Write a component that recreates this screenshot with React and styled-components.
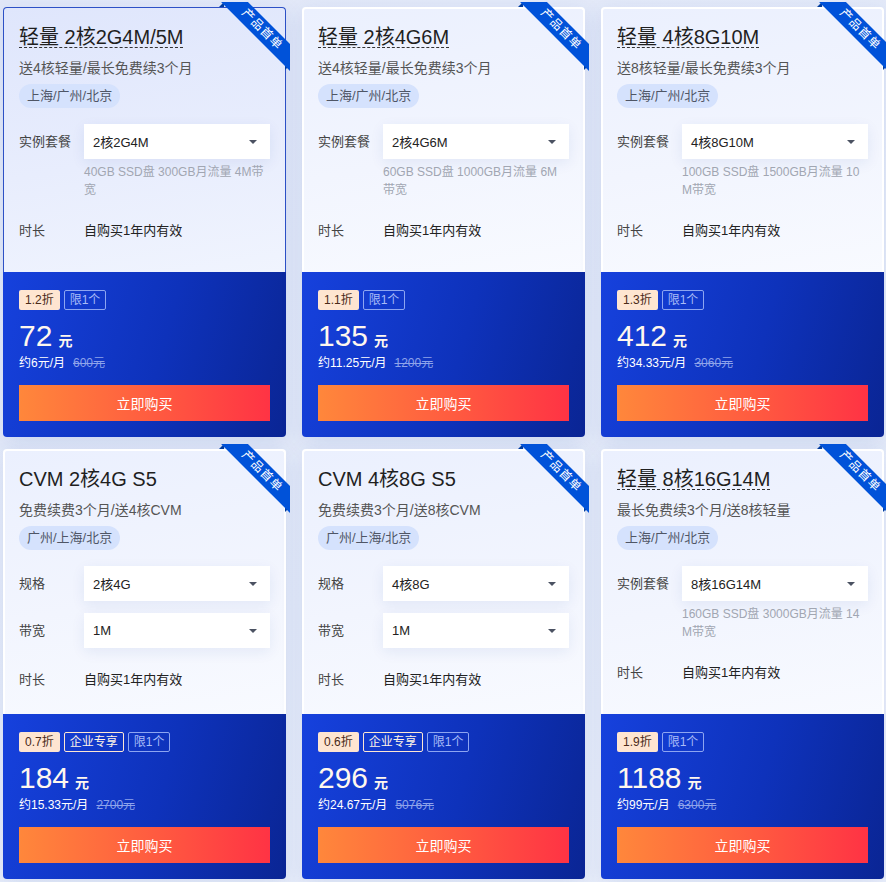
import styled, { createGlobalStyle } from "styled-components"

const GlobalStyle = createGlobalStyle`
  html, body {
    margin: 0;
    padding: 0;
    background: #e4eaf8;
  }
  body {
    font-family: "Liberation Sans", "Noto Sans CJK SC", sans-serif;
    color: #222;
  }
`

const cards = [
  {
    title: "轻量 2核2G4M/5M",
    dashed: true,
    sub: "送4核轻量/最长免费续3个月",
    region: "上海/广州/北京",
    fields: [{ label: "实例套餐", value: "2核2G4M", desc: "40GB SSD盘 300GB月流量 4M带宽" }],
    discount: "1.2折",
    tags: ["限1个"],
    price: "72",
    monthly: "约6元/月",
    origin: "600元",
    active: true,
  },
  {
    title: "轻量 2核4G6M",
    dashed: true,
    sub: "送4核轻量/最长免费续3个月",
    region: "上海/广州/北京",
    fields: [{ label: "实例套餐", value: "2核4G6M", desc: "60GB SSD盘 1000GB月流量 6M带宽" }],
    discount: "1.1折",
    tags: ["限1个"],
    price: "135",
    monthly: "约11.25元/月",
    origin: "1200元",
  },
  {
    title: "轻量 4核8G10M",
    dashed: true,
    sub: "送8核轻量/最长免费续3个月",
    region: "上海/广州/北京",
    fields: [{ label: "实例套餐", value: "4核8G10M", desc: "100GB SSD盘 1500GB月流量 10M带宽" }],
    discount: "1.3折",
    tags: ["限1个"],
    price: "412",
    monthly: "约34.33元/月",
    origin: "3060元",
  },
  {
    title: "CVM 2核4G S5",
    sub: "免费续费3个月/送4核CVM",
    region: "广州/上海/北京",
    fields: [
      { label: "规格", value: "2核4G" },
      { label: "带宽", value: "1M" },
    ],
    discount: "0.7折",
    tags: ["企业专享", "限1个"],
    price: "184",
    monthly: "约15.33元/月",
    origin: "2700元",
  },
  {
    title: "CVM 4核8G S5",
    sub: "免费续费3个月/送8核CVM",
    region: "广州/上海/北京",
    fields: [
      { label: "规格", value: "4核8G" },
      { label: "带宽", value: "1M" },
    ],
    discount: "0.6折",
    tags: ["企业专享", "限1个"],
    price: "296",
    monthly: "约24.67元/月",
    origin: "5076元",
  },
  {
    title: "轻量 8核16G14M",
    dashed: true,
    sub: "最长免费续3个月/送8核轻量",
    region: "上海/广州/北京",
    fields: [{ label: "实例套餐", value: "8核16G14M", desc: "160GB SSD盘 3000GB月流量 14M带宽" }],
    discount: "1.9折",
    tags: ["限1个"],
    price: "1188",
    monthly: "约99元/月",
    origin: "6300元",
  },
]

const ProductCard = ({ card }) => (
  <Card>
    <Ribbon>
      <RibbonBand>产品首单</RibbonBand>
    </Ribbon>
    <Top $active={card.active}>
      <Title>
        <TitleText $dashed={card.dashed}>{card.title}</TitleText>
      </Title>
      <Sub>{card.sub}</Sub>
      <Region>{card.region}</Region>
      {card.fields.map((f) => (
        <Field key={f.label}>
          <Label>{f.label}</Label>
          <div>
            <SelectBox>
              <span>{f.value}</span>
              <Caret />
            </SelectBox>
            {f.desc && <Desc>{f.desc}</Desc>}
          </div>
        </Field>
      ))}
      <TimeRow>
        <Label>时长</Label>
        <TimeValue>自购买1年内有效</TimeValue>
      </TimeRow>
    </Top>
    <Bottom>
      <Badges>
        <Discount>{card.discount}</Discount>
        {card.tags.map((t) => (
          <Tag key={t} $vip={t === "企业专享"}>
            {t}
          </Tag>
        ))}
      </Badges>
      <Price>
        {card.price}
        <Unit>元</Unit>
      </Price>
      <Monthly>
        {card.monthly}
        <Origin>{card.origin}</Origin>
      </Monthly>
      <BuyButton>立即购买</BuyButton>
    </Bottom>
  </Card>
)

const App = () => (
  <>
    <GlobalStyle />
    <Page>
      {cards.map((c) => (
        <ProductCard key={c.title} card={c} />
      ))}
    </Page>
  </>
)

const Page = styled.main`
  display: grid;
  grid-template-columns: repeat(3, 283px);
  align-content: start;
  column-gap: 16px;
  row-gap: 12px;
  padding: 7px 2px 4px 3px;
  min-height: 882px;
  box-sizing: border-box;
  background: linear-gradient(160deg, #e2e8f8 0%, #e6ecf9 60%, #edf1fb 100%);
`

const Card = styled.article`
  position: relative;
  display: flex;
  flex-direction: column;
  border-radius: 4px;
  box-shadow: 0 6px 22px rgba(40, 80, 180, 0.12);
`

const Ribbon = styled.div`
  position: absolute;
  top: -5px;
  right: -4px;
  width: 74px;
  height: 74px;
  overflow: hidden;
  z-index: 2;
  &::before,
  &::after {
    content: "";
    position: absolute;
    width: 0;
    height: 0;
  }
  &::before {
    left: 3px;
    top: 0;
    border-bottom: 5px solid #003c9e;
    border-left: 5px solid transparent;
  }
  &::after {
    right: 0;
    bottom: 6px;
    border-top: 5px solid #003c9e;
    border-right: 5px solid transparent;
  }
`

const RibbonBand = styled.div`
  position: absolute;
  left: -9px;
  top: 18px;
  width: 110px;
  height: 19px;
  line-height: 19px;
  background: #0052d9;
  color: #fff;
  font-size: 12px;
  letter-spacing: 1px;
  text-align: center;
  transform: rotate(45deg);
  z-index: 1;
`

const Top = styled.section`
  flex: 1;
  min-height: 265px;
  box-sizing: border-box;
  padding: 17px 14px 22px;
  border: 2px solid #fff;
  border-bottom: none;
  border-radius: 4px 4px 0 0;
  background: linear-gradient(170deg, #ebf0fe 0%, #f2f5fe 55%, #f8faff 100%);
  ${(p) =>
    p.$active &&
    `
    padding: 18px 15px 22px;
    border: 1px solid #2d51c6;
    border-bottom: none;
    background: linear-gradient(170deg, #dfe6fc 0%, #e8edfd 55%, #f0f4fe 100%);
  `}
`

const Title = styled.h2`
  margin: 0;
  height: 22px;
  font-size: 20px;
  font-weight: 400;
  line-height: 22px;
  color: #1f1f1f;
`

const TitleText = styled.span`
  display: inline-block;
  height: 21px;
  border-bottom: 1px dashed ${(p) => (p.$dashed ? "#333" : "transparent")};
`

const Sub = styled.p`
  margin: 10px 0 0;
  height: 20px;
  font-size: 14px;
  line-height: 20px;
  color: #555;
`

const Region = styled.span`
  display: inline-block;
  margin-top: 6px;
  padding: 0 8px;
  height: 24px;
  line-height: 24px;
  border-radius: 12px;
  background: #d5e2fd;
  color: #4f5666;
  font-size: 13px;
`

const Field = styled.div`
  display: grid;
  grid-template-columns: 65px 1fr;
  margin-top: 16px;
  & + & {
    margin-top: 12px;
  }
`

const Label = styled.span`
  font-size: 13px;
  line-height: 35px;
  color: #444;
`

const SelectBox = styled.div`
  display: flex;
  align-items: center;
  justify-content: space-between;
  height: 35px;
  padding: 0 13px 0 9px;
  background: #fff;
  box-shadow: 0 4px 14px rgba(30, 60, 150, 0.08);
  font-size: 13px;
  color: #222;
`

const Caret = styled.i`
  width: 0;
  height: 0;
  border-left: 4px solid transparent;
  border-right: 4px solid transparent;
  border-top: 4px solid #4b5262;
`

const Desc = styled.p`
  margin: 4px 0 0;
  font-size: 12px;
  line-height: 18px;
  color: #a1a6b2;
  word-break: break-all;
`

const TimeRow = styled.div`
  display: grid;
  grid-template-columns: 65px 1fr;
  margin-top: 22px;
  ${Label} {
    line-height: 20px;
  }
`

const TimeValue = styled.span`
  font-size: 13px;
  line-height: 20px;
  color: #222;
`

const Bottom = styled.section`
  height: 165px;
  box-sizing: border-box;
  padding: 18px 16px 16px;
  border-radius: 0 0 4px 4px;
  background: linear-gradient(105deg, #1641dd 0%, #0e32bb 55%, #0a2594 100%);
  color: #fff;
`

const Badges = styled.div`
  display: flex;
  gap: 4px;
  height: 20px;
`

const Discount = styled.span`
  padding: 0 6px;
  line-height: 20px;
  border-radius: 2px;
  background: #fee5d1;
  color: #4a2a18;
  font-size: 12px;
`

const Tag = styled.span`
  padding: 0 5px;
  line-height: 18px;
  border-radius: 2px;
  border: 1px solid ${(p) => (p.$vip ? "#fde6d2" : "#8da5f1")};
  color: ${(p) => (p.$vip ? "#fff3e6" : "#a9bcf7")};
  font-size: 12px;
`

const Price = styled.div`
  display: flex;
  align-items: baseline;
  height: 32px;
  margin-top: 10px;
  font-size: 30px;
  line-height: 32px;
  color: #fff7ee;
`

const Unit = styled.span`
  margin-left: 6px;
  font-size: 14px;
  font-weight: 700;
`

const Monthly = styled.div`
  display: flex;
  align-items: center;
  height: 16px;
  margin-top: 3px;
  font-size: 12px;
  line-height: 16px;
  color: #fff;
`

const Origin = styled.span`
  margin-left: 8px;
  color: #8ea3ea;
  text-decoration: line-through;
`

const BuyButton = styled.button`
  display: block;
  width: 100%;
  height: 36px;
  margin-top: 14px;
  border: none;
  background: linear-gradient(90deg, #ff873b 0%, #ff5a40 55%, #ff3344 100%);
  color: #fff;
  font-family: inherit;
  font-size: 14px;
  cursor: pointer;
`

export default App
